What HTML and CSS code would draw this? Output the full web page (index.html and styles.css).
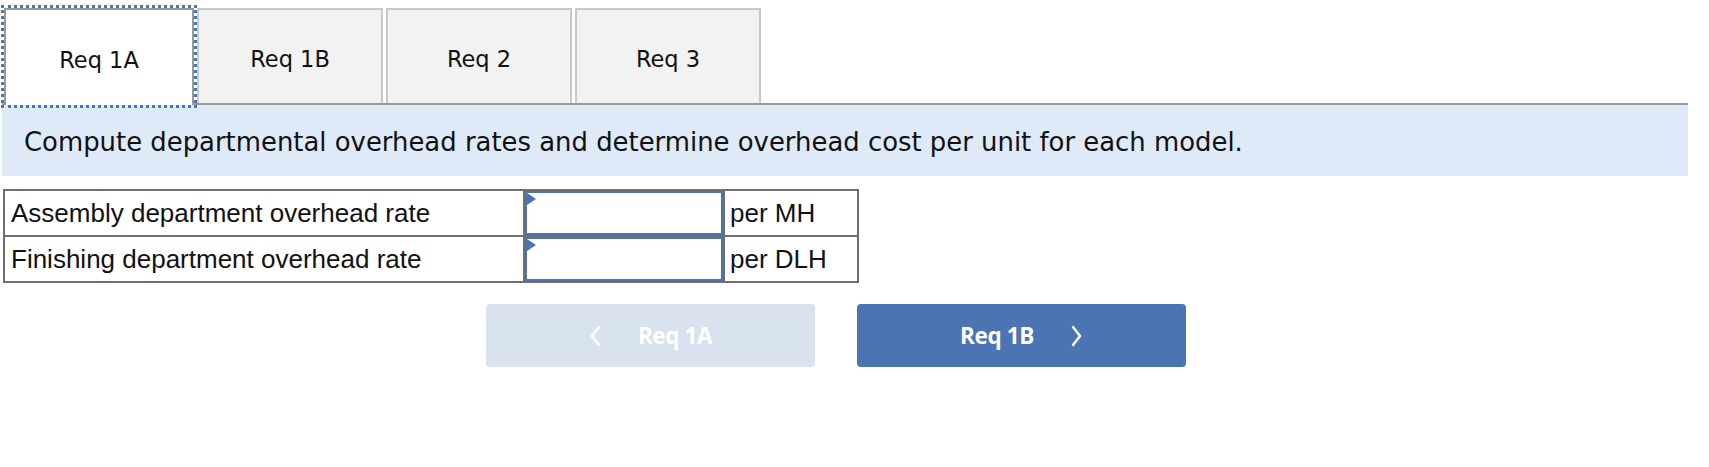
FILE: index.html
```html
<!DOCTYPE html>
<html>
<head>
<meta charset="utf-8">
<link rel="stylesheet" href="styles.css">
</head>
<body>
<div class="page">
  <div class="tabs">
    <div class="tab active">Req 1A</div>
    <div class="tab">Req 1B</div>
    <div class="tab">Req 2</div>
    <div class="tab">Req 3</div>
  </div>
  <div class="prompt">Compute departmental overhead rates and determine overhead cost per unit for each model.</div>
  <table class="grid">
    <tr>
      <td class="label">Assembly department overhead rate</td>
      <td class="entry"><div class="box"><span class="flag"></span></div></td>
      <td class="unit">per MH</td>
    </tr>
    <tr>
      <td class="label">Finishing department overhead rate</td>
      <td class="entry"><div class="box"><span class="flag"></span></div></td>
      <td class="unit">per DLH</td>
    </tr>
  </table>
  <div class="nav">
    <div class="btn prev"><svg class="chev" width="12" height="22" viewBox="0 0 12 22"><path d="M10 2 L3 11 L10 20" fill="none" stroke="#fff" stroke-width="2.4" stroke-linecap="round" stroke-linejoin="round"/></svg><span>Req 1A</span></div>
    <div class="btn next"><span>Req 1B</span><svg class="chev" width="12" height="22" viewBox="0 0 12 22"><path d="M2 2 L9 11 L2 20" fill="none" stroke="#fff" stroke-width="2.4" stroke-linecap="round" stroke-linejoin="round"/></svg></div>
  </div>
</div>
</body>
</html>
```
FILE: styles.css
```css
html, body {
  margin: 0;
  padding: 0;
  background: #fff;
}
.page {
  padding: 0 21px 0 2px;
}
.tabs {
  display: flex;
  gap: 3px;
  padding: 8px 0 0 2px;
  border-bottom: 2px solid #9a9a9a;
}
.tab {
  box-sizing: border-box;
  width: 190px;
  height: 95px;
  background: #f2f2f2;
  border: 2px solid #c8c8c8;
  border-bottom: none;
  display: flex;
  align-items: center;
  justify-content: center;
  padding-top: 5px;
  font-family: "DejaVu Sans", Verdana, sans-serif;
  font-size: 22.5px;
  color: #111;
}
.tab + .tab {
  width: 186px;
}
.tab.active {
  background: #fff;
  border-color: #999;
  outline: 3px dotted #4a76b8;
  outline-offset: 0;
  height: 97px;
  margin-bottom: -2px;
  position: relative;
  z-index: 1;
}
.prompt {
  background: #deeaf7;
  height: 71px;
  display: flex;
  align-items: center;
  padding-left: 22px;
  padding-top: 2px;
  box-sizing: border-box;
  font-family: "DejaVu Sans", Verdana, sans-serif;
  font-size: 25.9px;
  color: #111;
}
.grid {
  margin: 13px 0 0 1px;
  border-collapse: collapse;
  font-family: "Liberation Sans", Arial, sans-serif;
  font-size: 26px;
  color: #111;
}
.grid td {
  border: 2px solid #6f6f6f;
  height: 44px;
  padding: 0;
}
.label {
  width: 512px;
  padding-left: 6px !important;
}
.entry {
  width: 198px;
}
.unit {
  width: 127px;
  padding-left: 5px !important;
}
.box {
  position: relative;
  box-sizing: border-box;
  height: 44px;
  border: 2px solid #4a74b2;
  background: #fff;
}
.flag {
  position: absolute;
  left: 0;
  top: 0;
  width: 0;
  height: 0;
  border-top: 6px solid transparent;
  border-bottom: 6px solid transparent;
  border-left: 9px solid #4a74b2;
}
.nav {
  display: flex;
  gap: 42px;
  margin: 21px 0 0 484px;
}
.btn {
  box-sizing: border-box;
  width: 329px;
  height: 63px;
  border-radius: 4px;
  display: flex;
  align-items: center;
  justify-content: center;
  gap: 37px;
  font-family: "Open Sans", sans-serif;
  font-weight: 700;
  font-size: 22.5px;
  letter-spacing: -0.4px;
  color: #fff;
}
.prev {
  background: #d9e2ef;
}
.next {
  background: #4a74b2;
}
.chev {
  display: block;
}
```
